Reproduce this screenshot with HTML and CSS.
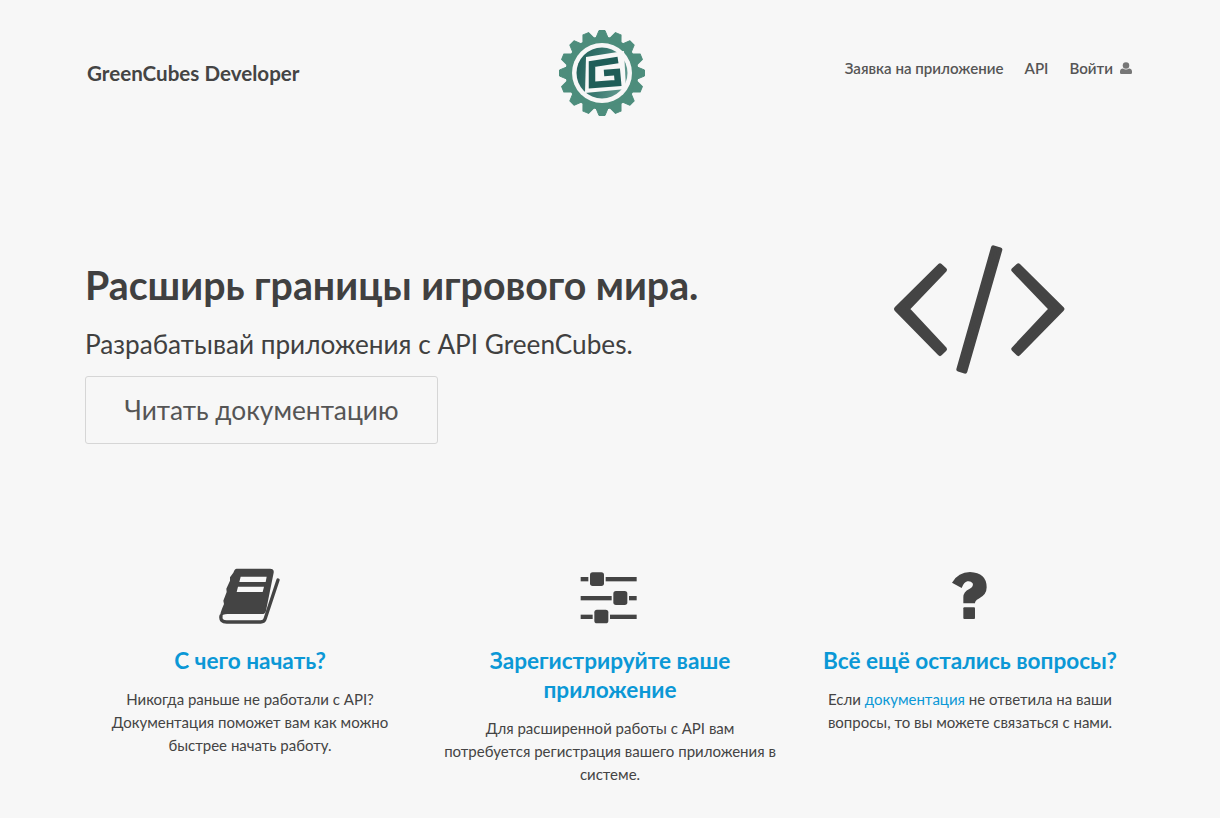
FILE: index.html
```html
<!DOCTYPE html>
<html lang="ru">

<head>
    <meta charset="UTF-8">
    <title>GreenCubes Developer</title>
    <link rel="stylesheet" href="styles.css">
</head>

<body>
    <header class="topbar">
        <a class="brand" href="#">GreenCubes Developer</a>
        <svg class="logo" viewBox="0 0 88 88" width="88" height="88">
            <defs>
                <path id="tooth" d="M37.500 10 L41 1.500 H47 L50.500 10z" stroke="#4d8d7c" stroke-width="1" stroke-linejoin="round"/>
                <linearGradient id="disc" x1="0" y1="0" x2="1" y2="0.3">
                    <stop offset="0" stop-color="#1f5d58"/>
                    <stop offset="0.6" stop-color="#3c7a72"/>
                    <stop offset="1" stop-color="#5f978d"/>
                </linearGradient>
            </defs>
            <g fill="#4d8d7c">
                <circle cx="44" cy="44" r="36.500"/>
                <use href="#tooth"/>
                <use href="#tooth" transform="rotate(22.5 44 44)"/>
                <use href="#tooth" transform="rotate(45 44 44)"/>
                <use href="#tooth" transform="rotate(67.5 44 44)"/>
                <use href="#tooth" transform="rotate(90 44 44)"/>
                <use href="#tooth" transform="rotate(112.5 44 44)"/>
                <use href="#tooth" transform="rotate(135 44 44)"/>
                <use href="#tooth" transform="rotate(157.5 44 44)"/>
                <use href="#tooth" transform="rotate(180 44 44)"/>
                <use href="#tooth" transform="rotate(202.5 44 44)"/>
                <use href="#tooth" transform="rotate(225 44 44)"/>
                <use href="#tooth" transform="rotate(247.5 44 44)"/>
                <use href="#tooth" transform="rotate(270 44 44)"/>
                <use href="#tooth" transform="rotate(292.5 44 44)"/>
                <use href="#tooth" transform="rotate(315 44 44)"/>
                <use href="#tooth" transform="rotate(337.5 44 44)"/>
            </g>
            <circle cx="44" cy="44" r="30" fill="#f7f7f7"/>
            <circle cx="44" cy="44" r="25.500" fill="url(#disc)"/>
            <path d="M28 28 L66 22 L68 60 L27 64z" fill="#f7f7f7"/>
            <path d="M60 31 L34 35 L34 56 L60 54 L59 43 L46 44" fill="none" stroke="#1f5d58" stroke-width="6.500"/>
        </svg>
        <nav class="topnav">
            <a href="#">Заявка на приложение</a>
            <a href="#">API</a>
            <a class="login" href="#">Войти
                <svg viewBox="0 0 14 14" width="12" height="14">
                    <circle cx="7" cy="4" r="3.800" fill="#777"/>
                    <path d="M1.500 14A1.500 1.500 0 0 1 0 12.500V11c0-2.200 1.500-3.500 3.500-3.500 1 .8 2.200 1.200 3.500 1.200s2.500-.4 3.500-1.200c2 0 3.500 1.300 3.500 3.500v1.500a1.500 1.500 0 0 1-1.500 1.500z" fill="#777"/>
                </svg>
            </a>
        </nav>
    </header>

    <section class="hero">
        <div class="hero-text">
            <h1>Расширь границы игрового мира.</h1>
            <p>Разрабатывай приложения с API GreenCubes.</p>
            <a class="button" href="#">Читать документацию</a>
        </div>
        <svg class="hero-code" viewBox="0 0 600 450" width="200" height="150">
            <g fill="#444" stroke="#444" stroke-width="14" stroke-linejoin="round">
                <path d="M49 222 L180 92 L194 105 L82 222 L194 342 L180 356z"/>
                <path d="M546 222 L415 92 L401 105 L513 222 L401 342 L415 356z"/>
                <path d="M340 38 L360 44 L255 409 L236 403z"/>
            </g>
        </svg>
    </section>

    <section class="features">
        <div class="feature">
            <svg class="feature-icon" viewBox="0 0 240 210" width="80" height="70">
                <path d="M80 26H180Q193 26 191 38L168 152Q166 162 156 162H52Q38 162 31 172Q30 160 36 146L42 132 40 122 50 96 49 86 60 62 60 52 70 38Q74 26 80 26z" fill="#444"/>
                <path d="M33 168Q30 186 50 186H152Q163 186 166 175L204 60" fill="none" stroke="#444" stroke-width="10" stroke-linecap="round"/>
                <path d="M92 50H170L167 66H88zM84 80H162L158 96H80z" fill="#f7f7f7"/>
            </svg>
            <h3>С чего начать?</h3>
            <p>Никогда раньше не работали с API? Документация поможет вам как можно быстрее начать работу.</p>
        </div>
        <div class="feature">
            <svg class="feature-icon" viewBox="0 0 240 210" width="80" height="70">
                <g fill="#444">
                    <rect x="32" y="51" width="23" height="13"/>
                    <rect x="107" y="51" width="93" height="13"/>
                    <rect x="32" y="108" width="93" height="13"/>
                    <rect x="177" y="108" width="23" height="13"/>
                    <rect x="32" y="164" width="36" height="13"/>
                    <rect x="120" y="164" width="80" height="13"/>
                    <rect x="60" y="37" width="42" height="41" rx="8"/>
                    <rect x="130" y="93" width="42" height="42" rx="8"/>
                    <rect x="73" y="149" width="42" height="41" rx="8"/>
                </g>
            </svg>
            <h3>Зарегистрируйте ваше приложение</h3>
            <p>Для расширенной работы с API вам потребуется регистрация вашего приложения в системе.</p>
        </div>
        <div class="feature">
            <svg class="feature-icon" viewBox="0 0 240 210" width="80" height="70">
                <path d="M66 68Q85 36 120 36Q170 38 170 82Q170 105 146 116Q134 122 135 130H100V112Q100 95 118 87Q132 80 128 70Q122 62 112 64Q102 66 95 84z" fill="#444"/>
                <rect x="100" y="142" width="35" height="35" rx="3" fill="#444"/>
            </svg>
            <h3>Всё ещё остались вопросы?</h3>
            <p>Если <a href="#">документация</a> не ответила на ваши вопросы, то вы можете связаться с нами.</p>
        </div>
    </section>
</body>

</html>
```

FILE: styles.css
```css
body {
    margin: 0;
    padding: 0;
    height: 818px;
    overflow: hidden;
    background-color: #f7f7f7;
    color: #444;
    font-family: Lato, "Noto Sans", sans-serif;
}

a {
    color: inherit;
    text-decoration: none;
}

.topbar {
    display: flex;
    align-items: center;
    justify-content: space-between;
    padding: 28px 88px 0 87px;
    position: relative;
    height: 90px;
}

.brand {
    font-size: 20.6px;
    font-weight: 700;
    color: #444;
}

.logo {
    position: absolute;
    left: 558px;
    top: 29px;
}

.topnav {
    display: flex;
    align-items: center;
    gap: 21px;
    margin-top: -10px;
    font-size: 15.1px;
    font-weight: 600;
    color: #555;
}

.login {
    display: flex;
    align-items: center;
    gap: 7px;
}

.hero {
    display: flex;
    justify-content: space-between;
    padding: 0 140px 0 85px;
    margin-top: 117px;
}

.hero h1 {
    margin: 27px 0 0;
    font-size: 39.3px;
    line-height: 46px;
    font-weight: 700;
    color: #404040;
}

.hero p {
    margin: 20px 0 0;
    font-size: 26.2px;
    line-height: 32px;
    color: #404040;
}

.button {
    display: flex;
    align-items: center;
    justify-content: center;
    box-sizing: border-box;
    width: 353px;
    height: 68px;
    margin-top: 16px;
    border: 1px solid #d6d6d6;
    border-radius: 3px;
    font-size: 26.3px;
    color: #555;
}

.features {
    display: grid;
    grid-template-columns: repeat(3, 360px);
    justify-content: center;
    margin-top: 116px;
    text-align: center;
}

.feature {
    padding: 0 12px;
}

.feature-icon {
    display: block;
    margin: 0 auto;
}

.feature h3 {
    margin: 16px 0 0;
    font-size: 22.6px;
    line-height: 29px;
    font-weight: 700;
    color: #0b98d6;
}

.feature p {
    margin: 13px 0 0;
    font-size: 15px;
    line-height: 23px;
    color: #444;
}

.feature p a {
    color: #0b98d6;
}
```
